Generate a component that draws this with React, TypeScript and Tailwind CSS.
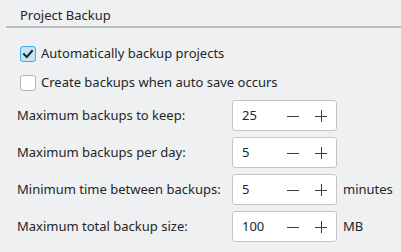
import React from 'react';

function CheckBox({ checked }: { checked?: boolean }) {
  return (
    <span
      className={`w-4 h-4 rounded-[3px] border flex items-center justify-center shrink-0 ${
        checked ? 'bg-[#c4e3f6] border-[#3daee9]' : 'bg-white border-[#b4b6b8]'
      }`}
    >
      {checked && (
        <svg width="12" height="12" viewBox="0 0 12 12" fill="none">
          <path d="M2 6.2 L4.8 9 L10 3" stroke="#232629" strokeWidth="2" strokeLinecap="square" />
        </svg>
      )}
    </span>
  );
}

function SpinBox({ value }: { value: string }) {
  return (
    <div className="w-[105px] h-[31px] bg-white border border-[#c3c5c7] rounded-[3px] flex items-center pl-[9px]">
      <span className="flex-1">{value}</span>
      <svg width="12" height="12" viewBox="0 0 12 12" className="mr-[16px]">
        <path d="M0 6.5 H12" stroke="#3a3d40" strokeWidth="1" />
      </svg>
      <svg width="12" height="12" viewBox="0 0 12 12" className="mr-[9px]">
        <path d="M0 6.5 H12 M6.5 0 V12" stroke="#3a3d40" strokeWidth="1" />
      </svg>
    </div>
  );
}

const rows = [
  { label: 'Maximum backups to keep:', value: '25' },
  { label: 'Maximum backups per day:', value: '5' },
  { label: 'Minimum time between backups:', value: '5', unit: 'minutes' },
  { label: 'Maximum total backup size:', value: '100', unit: 'MB' },
];

export default function App() {
  return (
    <div className="w-[401px] h-[252px] bg-[#eff0f1] text-[#232629] text-[13px] font-['Noto_Sans',sans-serif] overflow-hidden">
      {/* Group title */}
      <div className="pl-[20px] pt-[6px] h-[26px] leading-[18px]">Project Backup</div>
      <div className="ml-[6px] h-[2px] bg-[#bcbec0]" />

      {/* Checkboxes */}
      <div className="pl-[20px] pt-[18px] flex flex-col gap-[13px]">
        <label className="flex items-center gap-[5px] h-[16px]">
          <CheckBox checked />
          <span>Automatically backup projects</span>
        </label>
        <label className="flex items-center gap-[5px] h-[16px]">
          <CheckBox />
          <span>Create backups when auto save occurs</span>
        </label>
      </div>

      {/* Spin box form */}
      <div className="pl-[17px] pt-[9px] grid grid-cols-[215px_105px_auto] gap-y-[6px] items-center">
        {rows.map((r) => (
          <React.Fragment key={r.label}>
            <span>{r.label}</span>
            <SpinBox value={r.value} />
            <span className="pl-[6px]">{r.unit ?? ''}</span>
          </React.Fragment>
        ))}
      </div>
    </div>
  );
}
